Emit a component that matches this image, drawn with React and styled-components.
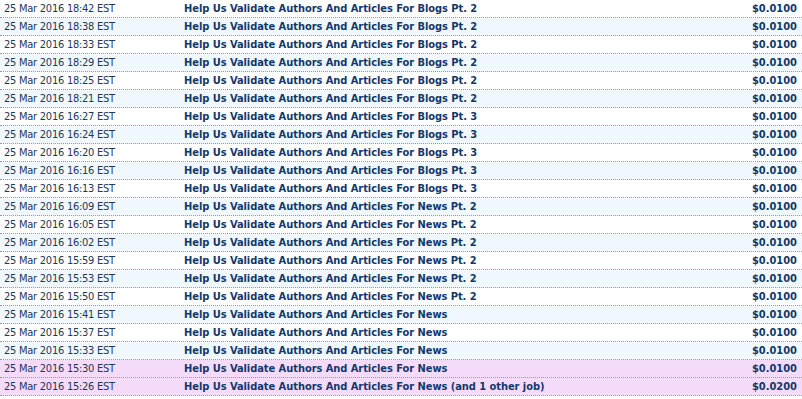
import React from "react";
import styled, { createGlobalStyle } from "styled-components";

const Global = createGlobalStyle`
  html, body { margin: 0; padding: 0; background: #ffffff; }
  body { font-family: "DejaVu Sans Condensed", "DejaVu Sans", sans-serif; font-size: 11px; }
`;

const List = styled.div`
  display: flex;
  flex-direction: column;
  width: 802px;
`;

const bg = { white: "#ffffff", blue: "#f0f8fd", purple: "#f5dbfa" };

const Row = styled.div`
  display: grid;
  grid-template-columns: 184px 1fr auto;
  align-items: center;
  height: 17px;
  line-height: 17px;
  border-bottom: 1px dotted #9a9a9a;
  background: ${(p) => bg[p.$tone]};
`;

const DateCell = styled.div`
  padding-left: 4px;
  color: #1f3758;
  letter-spacing: -0.25px;
  white-space: nowrap;
`;

const Title = styled.div`
  font-weight: bold;
  color: #12386a;
  letter-spacing: -0.05px;
  white-space: nowrap;
`;

const Amount = styled.div`
  font-weight: bold;
  color: #12386a;
  padding-right: 5px;
  text-align: right;
`;

const rows = [
  ["18:42", "Blogs Pt. 2"],
  ["18:38", "Blogs Pt. 2"],
  ["18:33", "Blogs Pt. 2"],
  ["18:29", "Blogs Pt. 2"],
  ["18:25", "Blogs Pt. 2"],
  ["18:21", "Blogs Pt. 2"],
  ["16:27", "Blogs Pt. 3"],
  ["16:24", "Blogs Pt. 3"],
  ["16:20", "Blogs Pt. 3"],
  ["16:16", "Blogs Pt. 3"],
  ["16:13", "Blogs Pt. 3"],
  ["16:09", "News Pt. 2"],
  ["16:05", "News Pt. 2"],
  ["16:02", "News Pt. 2"],
  ["15:59", "News Pt. 2"],
  ["15:53", "News Pt. 2"],
  ["15:50", "News Pt. 2"],
  ["15:41", "News"],
  ["15:37", "News"],
  ["15:33", "News"],
  ["15:30", "News", "purple"],
  ["15:26", "News (and 1 other job)", "purple", "$0.0200"],
];

export default function App() {
  return (
    <>
      <Global />
      <List>
        {rows.map(([t, s, tone, amt], i) => (
          <Row key={i} $tone={tone || (i % 2 ? "blue" : "white")}>
            <DateCell>25 Mar 2016 {t} EST</DateCell>
            <Title>Help Us Validate Authors And Articles For {s}</Title>
            <Amount>{amt || "$0.0100"}</Amount>
          </Row>
        ))}
      </List>
    </>
  );
}
